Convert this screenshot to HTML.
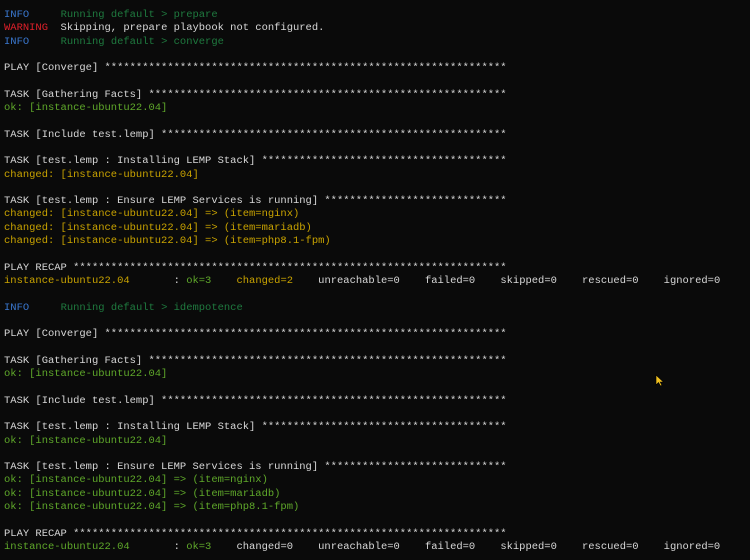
<!DOCTYPE html>
<html><head><meta charset="utf-8"><style>
html,body{margin:0;padding:0;background:#0a0a0a;width:750px;height:560px;overflow:hidden}
pre{margin:0;position:absolute;left:4px;top:9px;font-family:"Liberation Mono",monospace;font-size:10.48px;line-height:13.3px;color:#d8d8d8}
.b{color:#3a78d0}.g{color:#1f7a3f}.r{color:#e0202a}.o{color:#5fa82a}.y{color:#c9a300}
</style></head><body>
<pre><span class="b">INFO</span>     <span class="g">Running default &gt; prepare</span>
<span class="r">WARNING</span>  Skipping, prepare playbook not configured.
<span class="b">INFO</span>     <span class="g">Running default &gt; converge</span>

PLAY [Converge] ****************************************************************

TASK [Gathering Facts] *********************************************************
<span class="o">ok: [instance-ubuntu22.04]</span>

TASK [Include test.lemp] *******************************************************

TASK [test.lemp : Installing LEMP Stack] ***************************************
<span class="y">changed: [instance-ubuntu22.04]</span>

TASK [test.lemp : Ensure LEMP Services is running] *****************************
<span class="y">changed: [instance-ubuntu22.04] =&gt; (item=nginx)</span>
<span class="y">changed: [instance-ubuntu22.04] =&gt; (item=mariadb)</span>
<span class="y">changed: [instance-ubuntu22.04] =&gt; (item=php8.1-fpm)</span>

PLAY RECAP *********************************************************************
<span class="y">instance-ubuntu22.04</span>       : <span class="o">ok=3</span>    <span class="y">changed=2</span>    unreachable=0    failed=0    skipped=0    rescued=0    ignored=0

<span class="b">INFO</span>     <span class="g">Running default &gt; idempotence</span>

PLAY [Converge] ****************************************************************

TASK [Gathering Facts] *********************************************************
<span class="o">ok: [instance-ubuntu22.04]</span>

TASK [Include test.lemp] *******************************************************

TASK [test.lemp : Installing LEMP Stack] ***************************************
<span class="o">ok: [instance-ubuntu22.04]</span>

TASK [test.lemp : Ensure LEMP Services is running] *****************************
<span class="o">ok: [instance-ubuntu22.04] =&gt; (item=nginx)</span>
<span class="o">ok: [instance-ubuntu22.04] =&gt; (item=mariadb)</span>
<span class="o">ok: [instance-ubuntu22.04] =&gt; (item=php8.1-fpm)</span>

PLAY RECAP *********************************************************************
<span class="o">instance-ubuntu22.04</span>       : <span class="o">ok=3</span>    changed=0    unreachable=0    failed=0    skipped=0    rescued=0    ignored=0</pre>
<svg style="position:absolute;left:655px;top:374px" width="10" height="13" viewBox="0 0 10 13"><path d="M1 1 L1 11 L3.5 8.5 L5.5 12 L7 11.3 L5.2 8 L8.5 8 Z" fill="#f0c020" stroke="#000" stroke-width="0.6"/></svg>
</body></html>
